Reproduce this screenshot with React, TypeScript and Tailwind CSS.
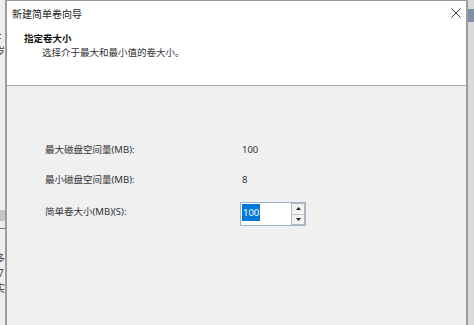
const font = { fontFamily: '"Noto Sans", "Noto Sans CJK SC", sans-serif' };

function SpinArrow({ up }: { up?: boolean }) {
  return (
    <svg width="5" height="3" viewBox="0 0 5 3">
      <polygon points={up ? "0,3 5,3 2.5,0" : "0,0 5,0 2.5,3"} fill="#222" />
    </svg>
  );
}

export default function App() {
  return (
    <div
      className="w-[474px] h-[325px] overflow-hidden flex bg-[#ececec] text-[#1e1e1e]"
      style={font}
    >
      {/* window behind, left edge */}
      <div className="w-[5px] h-full overflow-hidden flex flex-col text-[10px] leading-[13px] text-[#444] bg-[#eeeeee]">
        <div className="mt-[6px] -ml-[4px]">(</div>
        <div className="-ml-[4px]">(</div>
        <div className="-ml-[4px]">F</div>
        <div className="-ml-[5px]">岁</div>
        <div className="mt-[152px] h-[11px] bg-[#c4c4c4]" />
        <div className="mt-[7px] h-[1px] bg-[#777]" />
        <div className="mt-[23px] -ml-[5px]">多</div>
        <div className="mt-[2px] -ml-[2px]">7</div>
        <div className="mt-[2px] -ml-[5px]">实</div>
      </div>

      {/* dialog */}
      <div className="w-[463px] h-full flex flex-col border-x-2 border-t border-[#9c9c9c]">
        <div className="h-[85px] bg-white border-b border-[#a8a8a8] flex flex-col">
          <div className="flex items-start justify-between pt-[6px] pl-[5px] pr-[5px]">
            <span className="text-[10px] leading-[14px] text-[#222]">新建简单卷向导</span>
            <svg className="mt-[1px]" width="10" height="10" viewBox="0 0 10 10">
              <path d="M0.5 0.5 L9.5 9.5 M9.5 0.5 L0.5 9.5" stroke="#333" strokeWidth="1" />
            </svg>
          </div>
          <div className="mt-[11px] pl-[17px] text-[9.5px] leading-[14px] font-bold text-[#111]">
            指定卷大小
          </div>
          <div className="pl-[35px] text-[9.5px] leading-[14px] text-[#333]">
            选择介于最大和最小值的卷大小。
          </div>
        </div>

        <div className="flex-1 bg-[#f0f0f0] pt-[57px] pl-[38px] text-[9.5px] leading-[14px] text-[#333]">
          <div className="flex">
            <div className="w-[195px]">最大磁盘空间量(MB):</div>
            <div className="ml-[2px]">100</div>
          </div>
          <div className="flex mt-[16px]">
            <div className="w-[195px]">最小磁盘空间量(MB):</div>
            <div className="ml-[2px]">8</div>
          </div>
          <div className="flex items-start mt-[15px]">
            <div className="w-[195px] mt-[3px]">简单卷大小(MB)(S):</div>
            <div className="w-[66px] h-[24px] border border-[#9fb4cc] bg-white flex">
              <div className="flex-1 pl-[1px] pt-[3px]">
                <span className="bg-[#0078d7] text-white px-[1px] py-[2px]">100</span>
              </div>
              <div className="w-[14px] flex flex-col border border-[#b8b8b8] bg-[#f2f2f2]">
                <div className="flex-1 flex items-center justify-center border-b border-[#c8c8c8]">
                  <SpinArrow up />
                </div>
                <div className="flex-1 flex items-center justify-center">
                  <SpinArrow />
                </div>
              </div>
            </div>
          </div>
        </div>
      </div>

      {/* window behind, right edge */}
      <div className="w-[6px] h-full flex flex-col bg-[#dadada]">
        <div className="mt-[9px] h-[13px] bg-[#7f90a8]" />
      </div>
    </div>
  );
}
